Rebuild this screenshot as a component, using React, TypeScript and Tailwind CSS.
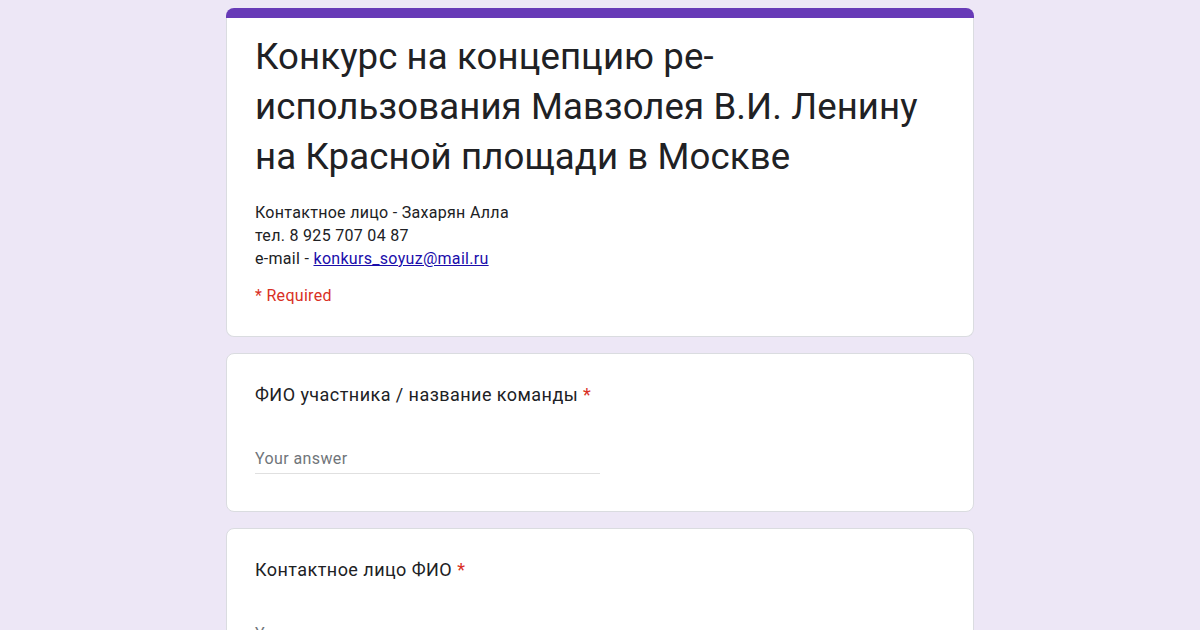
const font = { fontFamily: 'Roboto, "Open Sans", Arial, sans-serif' };

function Question({ title }: { title: string }) {
  return (
    <div className="rounded-lg border border-[#dadce0] bg-white px-[28px] pt-[29px] pb-[37px]">
      <div className="text-[18px] leading-[24px] tracking-[0.45px] text-[#202124]">
        {title} <span className="text-[#d93025]">*</span>
      </div>
      <div className="mt-[42px] w-[345px] border-b border-[#e0e0e0] pb-[4px] text-[16px] leading-[20px] tracking-[0.4px] text-[#70757a]">
        Your answer
      </div>
    </div>
  );
}

export default function App() {
  return (
    <div className="h-[630px] overflow-hidden bg-[#ede7f6]" style={font}>
      <div className="mx-auto flex w-[748px] flex-col gap-4 pt-2 pb-8">
        <div>
          <div className="h-[10px] rounded-t-lg bg-[#673ab7]" />
          <div className="rounded-b-lg border border-t-0 border-[#dadce0] bg-white px-[28px] pt-[14px] pb-[30px]">
            <h1 className="text-[36.6px] leading-[50px] tracking-[0.1px] text-[#202124]">
              Конкурс на концепцию ре-использования Мавзолея В.И. Ленину на Красной площади в Москве
            </h1>
            <div className="mt-[19px] text-[16px] leading-[23px] tracking-[0.3px] text-[#202124]">
              <div>Контактное лицо - Захарян Алла</div>
              <div>тел. 8 925 707 04 87</div>
              <div>
                e-mail - <a href="#" className="text-[#1a0dab] underline">konkurs_soyuz@mail.ru</a>
              </div>
            </div>
            <div className="mt-[16px] text-[16px] leading-[20px] tracking-[0.3px] text-[#d93025]">* Required</div>
          </div>
        </div>
        <Question title="ФИО участника / название команды" />
        <Question title="Контактное лицо ФИО" />
      </div>
    </div>
  );
}
